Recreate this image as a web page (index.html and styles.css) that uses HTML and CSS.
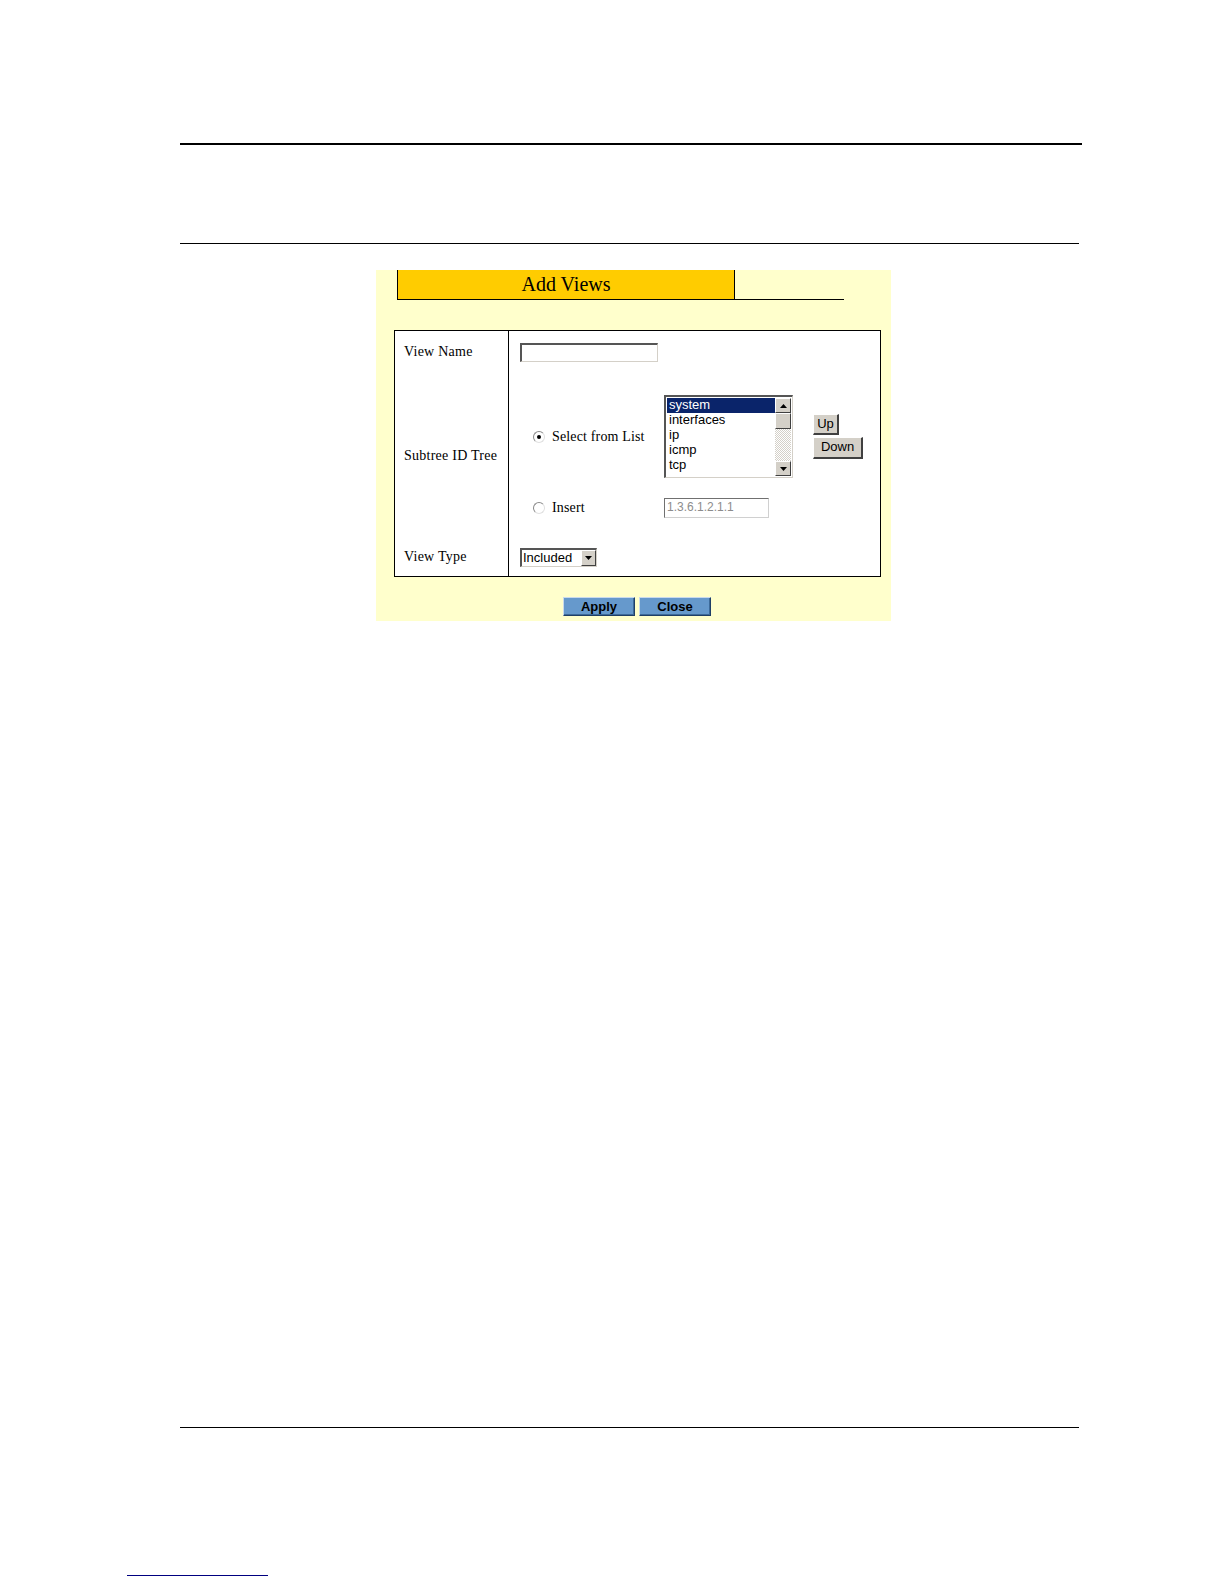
FILE: index.html
```html
<!DOCTYPE html>
<html>
<head>
<meta charset="utf-8">
<link rel="stylesheet" href="styles.css">
</head>
<body>
<div class="page">
  <div class="rule-thick"></div>
  <div class="rule-thin"></div>
  <div class="panel">
    <div class="header">
      <div class="tab">Add Views</div>
      <div class="tab-tail"></div>
    </div>
    <div class="form">
      <div class="label row1">View Name</div>
      <div class="field row1"><div class="textbox"></div></div>
      <div class="label row2">Subtree ID Tree</div>
      <div class="field row2">
        <div class="subtree">
          <div class="opt"><span class="radio checked"></span><span>Select from List</span></div>
          <div class="listbox">
            <div class="items">
              <div class="item sel">system</div>
              <div class="item">interfaces</div>
              <div class="item">ip</div>
              <div class="item">icmp</div>
              <div class="item">tcp</div>
            </div>
            <div class="scroll">
              <div class="sbtn"><svg width="7" height="4" viewBox="0 0 7 4"><path d="M3.5 0L7 4H0z" fill="#000"/></svg></div>
              <div class="thumb"></div>
              <div class="track"></div>
              <div class="sbtn"><svg width="7" height="4" viewBox="0 0 7 4"><path d="M0 0H7L3.5 4z" fill="#000"/></svg></div>
            </div>
          </div>
          <div class="moves">
            <div class="wbtn up">Up</div>
            <div class="wbtn down">Down</div>
          </div>
          <div class="opt insert"><span class="radio"></span><span>Insert</span></div>
          <div class="textbox oid">1.3.6.1.2.1.1</div>
        </div>
      </div>
      <div class="label row3">View Type</div>
      <div class="field row3">
        <div class="select"><span class="sval">Included</span><span class="sarrow"><svg width="7" height="4" viewBox="0 0 7 4"><path d="M0 0H7L3.5 4z" fill="#000"/></svg></span></div>
      </div>
    </div>
    <div class="actions">
      <div class="bbtn">Apply</div>
      <div class="bbtn">Close</div>
    </div>
  </div>
  <div class="rule-bottom"></div>
  <div class="footer-link"></div>
</div>
</body>
</html>
```
FILE: styles.css
```css
html, body { margin: 0; padding: 0; background: #fff; }
.page { width: 1224px; height: 1584px; padding-top: 143px; box-sizing: border-box; font-family: "Liberation Serif", "Times New Roman", serif; color: #000; }
.rule-thick { margin-left: 180px; width: 902px; height: 2px; background: #000; }
.rule-thin { margin-left: 180px; margin-top: 98px; width: 899px; height: 1px; background: #000; }
.panel { margin-left: 376px; margin-top: 26px; width: 515px; height: 351px; background: #ffffcc; box-sizing: border-box; padding-left: 18px; padding-top: 0; }
.header { display: flex; align-items: flex-end; margin-left: 3px; }
.tab { width: 338px; height: 30px; box-sizing: border-box; background: #ffcc00; border: 1px solid #000; border-top: none; text-align: center; font-size: 20px; line-height: 29px; padding-top: 0; }
.tab-tail { width: 110px; height: 1px; background: #000; margin-bottom: 0; margin-left: -1px; }
.form { margin-top: 30px; width: 487px; height: 247px; box-sizing: border-box; border: 1px solid #000; display: grid; grid-template-columns: 114px 1fr; grid-template-rows: 43px 163px 39px; background: #fff; }
.label { border-right: 1px solid #000; font-size: 14px; letter-spacing: 0.25px; padding-left: 9px; display: flex; align-items: center; }
.label.row1 { align-items: flex-start; padding-top: 13px; }
.field { display: flex; align-items: center; padding-left: 11px; }
.field.row1 { align-items: flex-start; padding-top: 12px; }
.textbox { width: 138px; height: 19px; box-sizing: border-box; background: #fff; border-style: solid; border-width: 2px 1px 1px 2px; border-color: #555 #d4d0c8 #d4d0c8 #555; }
.subtree { display: grid; grid-template-columns: 131px 129px 149px; grid-template-rows: 83px 20px; row-gap: 20px; margin-left: 13px; margin-top: 2px; align-items: center; font-size: 14px; letter-spacing: 0.15px; }
.opt { display: flex; align-items: center; gap: 7px; }
.opt.insert { grid-column: 1; }
.radio { width: 12px; height: 12px; box-sizing: border-box; border-radius: 50%; border: 1px solid #8a8a8a; border-right-color: #e0e0e0; border-bottom-color: #e0e0e0; background: #fff; position: relative; }
.radio.checked::after { content: ""; position: absolute; left: 3px; top: 3px; width: 4px; height: 4px; border-radius: 50%; background: #000; }
.listbox { width: 129px; height: 83px; box-sizing: border-box; border-style: solid; border-width: 2px 1px 1px 2px; border-color: #555 #d4d0c8 #d4d0c8 #555; background: #fff; display: flex; padding: 1px 1px 1px 1px; }
.items { flex: 1; font-family: "Liberation Sans", Arial, sans-serif; font-size: 13px; letter-spacing: 0; }
.item { height: 15px; line-height: 14px; padding-left: 2px; }
.item.sel { background: #0a246a; color: #fff; }
.scroll { width: 16px; display: flex; flex-direction: column; }
.sbtn { width: 16px; height: 15px; box-sizing: border-box; background: #d4d0c8; border-style: solid; border-width: 1px; border-color: #fff #404040 #404040 #fff; display: flex; align-items: center; justify-content: center; }
.thumb { height: 16px; box-sizing: border-box; background: #d4d0c8; border-style: solid; border-width: 1px; border-color: #fff #404040 #404040 #fff; }
.track { flex: 1; background: repeating-conic-gradient(#fff 0 25%, #d4d0c8 0 50%) 0 0 / 2px 2px; }
.moves { display: flex; flex-direction: column; gap: 2px; padding-left: 20px; align-items: flex-start; }
.wbtn { height: 21px; box-sizing: border-box; background: #d4d0c8; border-style: solid; border-width: 1px 2px 2px 1px; border-color: #fff #404040 #404040 #fff; font-family: "Liberation Sans", Arial, sans-serif; font-size: 13px; letter-spacing: 0; line-height: 18px; text-align: center; }
.wbtn.up { width: 26px; }
.wbtn.down { width: 50px; height: 22px; }
.textbox.oid { width: 105px; height: 20px; color: #8c8c8c; font-family: "Liberation Sans", Arial, sans-serif; font-size: 12px; letter-spacing: 0; line-height: 16px; padding-left: 2px; border-width: 1px; border-color: #707070 #d0d0d0 #d0d0d0 #707070; }
.select { width: 77px; height: 19px; box-sizing: border-box; border-style: solid; border-width: 2px 1px 1px 2px; border-color: #555 #d4d0c8 #d4d0c8 #555; background: #fff; display: flex; margin-top: 1px; }
.sval { flex: 1; font-family: "Liberation Sans", Arial, sans-serif; font-size: 13px; line-height: 15px; padding-left: 1px; }
.sarrow { width: 15px; box-sizing: border-box; background: #d4d0c8; border-style: solid; border-width: 1px; border-color: #fff #404040 #404040 #fff; display: flex; align-items: center; justify-content: center; }
.actions { display: flex; gap: 4px; margin-top: 20px; margin-left: 169px; }
.bbtn { width: 72px; height: 19px; box-sizing: border-box; background: #6699cc; border: 1px solid #1f3f66; border-top-color: #c9daec; border-left-color: #c9daec; box-shadow: inset -1px -1px 0 #3d6a99; font-family: "Liberation Sans", Arial, sans-serif; font-weight: bold; font-size: 13px; line-height: 17px; text-align: center; color: #000; }
.rule-bottom { margin-left: 180px; margin-top: 806px; width: 899px; height: 1px; background: #000; }
.footer-link { margin-left: 127px; margin-top: 147px; width: 141px; height: 1px; background: #000080; }
```
